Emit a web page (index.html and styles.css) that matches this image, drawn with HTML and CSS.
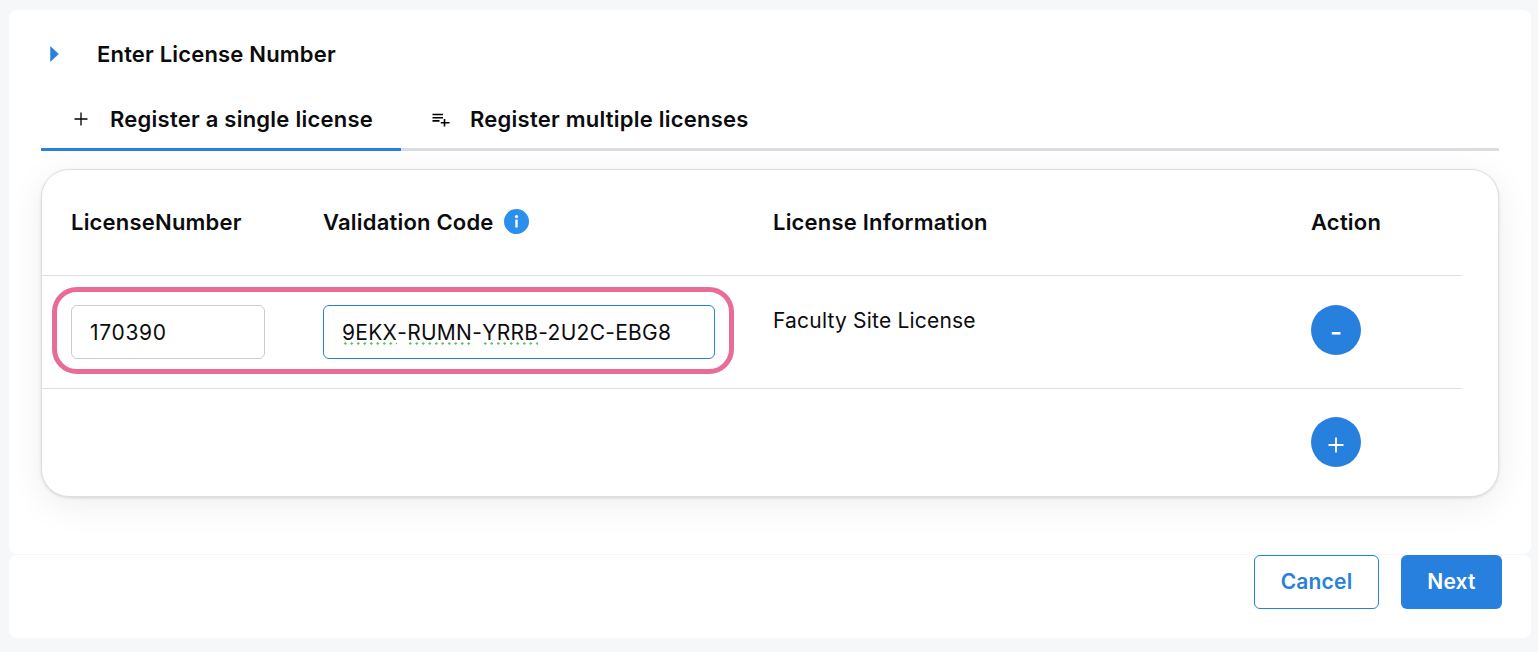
FILE: index.html
```html
<!DOCTYPE html>
<html lang="en">
<head>
<meta charset="utf-8">
<title>Enter License Number</title>
<link rel="stylesheet" href="styles.css">
</head>
<body>
<main class="panel">
  <header class="title-row">
    <svg class="caret" width="9" height="16" viewBox="0 0 9 16"><path d="M0.5 0.5 L8.5 8 L0.5 15.5 Z" fill="#2880de" stroke="#2880de" stroke-width=".5" stroke-linejoin="round"/></svg>
    <h1>Enter License Number</h1>
  </header>
  <nav class="tabs">
    <div class="tab active">
      <svg class="tab-icon" width="16" height="16" viewBox="0 0 16 16"><path d="M8 1.5V14.5M1.5 8H14.5" stroke="#000" stroke-width="1.3" fill="none"/></svg>
      <span>Register a single license</span>
    </div>
    <div class="tab second">
      <svg class="tab-icon-small" width="18" height="14" viewBox="0 0 18 14"><path d="M0.5 1.5H11M0.5 4.7H11M0.5 7.9H7.5M12.5 6V13.5M8.8 9.7H17.5" stroke="#000" stroke-width="1.6" fill="none"/></svg>
      <span>Register multiple licenses</span>
    </div>
  </nav>
  <section class="table-card">
    <div class="row head">
      <div class="col c1">LicenseNumber</div>
      <div class="col c2">Validation Code
        <svg class="info" width="25" height="25" viewBox="0 0 25 25"><circle cx="12.5" cy="12.5" r="12.5" fill="#2b8fee"/><rect x="11.3" y="10.6" width="2.4" height="8" rx=".6" fill="#fff"/><circle cx="12.5" cy="7.6" r="1.6" fill="#fff"/></svg>
      </div>
      <div class="col c3">License Information</div>
      <div class="col c4">Action</div>
    </div>
    <div class="row body">
      <div class="outline"></div>
      <div class="col c1"><div class="field small">170390</div></div>
      <div class="col c2"><div class="field focus"><span class="spell">9EKX</span>-<span class="spell">RUMN</span>-<span class="spell">YRRB</span>-2U2C-EBG8</div></div>
      <div class="col c3 info-text">Faculty Site License</div>
      <div class="col c4"><button class="round minus">-</button></div>
    </div>
    <div class="row foot">
      <div class="col c1"></div>
      <div class="col c2"></div>
      <div class="col c3"></div>
      <div class="col c4"><button class="round plus">
        <svg width="16" height="16" viewBox="0 0 16 16"><path d="M8 .5V15.5M.5 8H15.5" stroke="#fff" stroke-width="1.8" fill="none"/></svg>
      </button></div>
    </div>
  </section>
</main>
<footer class="actions">
  <button class="btn ghost">Cancel</button>
  <button class="btn solid">Next</button>
</footer>
</body>
</html>
```
FILE: styles.css
```css
* { box-sizing: border-box; }
html, body { margin: 0; height: 100%; }
body {
  background: #f6f7f9;
  padding: 10px 7px 0 9px;
  font-family: Inter, "Liberation Sans", sans-serif;
  color: #0c0c0f;
  overflow: hidden;
}
.panel {
  background: #fff;
  border-radius: 8px;
  height: 544px;
  padding: 0 32px;
}
.title-row {
  height: 88px;
  display: flex;
  align-items: center;
}
.caret { margin: 0 0 1px 9px; flex: none; }
h1 {
  margin: 0 0 0 38px;
  font-size: 22px;
  font-weight: 600;
  letter-spacing: 0.18px;
}
.tabs {
  height: 53px;
  display: flex;
  border-bottom: 3px solid #d9dde1;
}
.tab {
  height: 53px;
  display: flex;
  align-items: center;
  font-size: 22px;
  font-weight: 600;
  letter-spacing: 0.24px;
  padding-bottom: 8px;
  border-bottom: 3px solid transparent;
}
.tab.active {
  width: 360px;
  border-bottom-color: #2880de;
  padding-left: 32px;
}
.tab-icon { margin-right: 21px; flex: none; }
.tab.second { padding-left: 31px; }
.tab-icon-small { margin: 2px 20px 0 0; flex: none; }
.table-card {
  margin-top: 18px;
  height: 328px;
  border-radius: 28px;
  border: 1px solid #dedfe1;
  background: #fff;
  box-shadow: 0 8px 36px rgba(0, 0, 0, 0.07), 0 1px 3px rgba(0, 0, 0, 0.12);
  width: 1458px;
}
.row {
  display: flex;
  width: 1420px;
  padding-left: 29px;
  position: relative;
}
.col { flex: none; }
.c1 { width: 252px; }
.c2 { width: 450px; display: flex; align-items: center; }
.c3 { width: 538px; }
.c4 { width: 151px; }
.head {
  height: 106px;
  align-items: center;
  border-bottom: 1px solid #dcdfe3;
  font-size: 22px;
  font-weight: 600;
  letter-spacing: 0.2px;
  padding-bottom: 2px;
}
.info { margin-left: 10px; }
.body {
  height: 113px;
  padding-top: 29px;
  border-bottom: 1px solid #dcdfe3;
  align-items: flex-start;
}
.field {
  height: 54px;
  border: 1px solid #c9ccd4;
  border-radius: 6px;
  padding-left: 18px;
  display: flex;
  align-items: center;
  font-size: 21px;
  letter-spacing: 0.28px;
  width: 392px;
  white-space: pre;
  background: #fff;
}
.field.small { width: 194px; letter-spacing: 0.7px; }
.field.focus { border-color: #2880de; }
.spell {
  background: radial-gradient(circle, #5cbf6a 1px, transparent 1.4px) 0 100% / 6.5px 3px repeat-x;
}
.info-text { font-size: 21px; letter-spacing: 0.2px; padding-top: 3px; }
.outline {
  position: absolute;
  left: 10px;
  top: 11px;
  width: 682px;
  height: 87px;
  border: 5px solid #e96c97;
  border-radius: 25px;
  pointer-events: none;
}
.foot { padding-top: 28px; }
.round {
  width: 50px;
  height: 50px;
  padding: 0;
  border: 0;
  border-radius: 50%;
  background: #2880de;
  color: #fff;
  font: 500 26px Inter, "Liberation Sans", sans-serif;
  display: flex;
  align-items: center;
  justify-content: center;
}
.minus { padding-top: 2px; }
.plus { padding-top: 5px; }
.actions {
  margin-top: 1px;
  height: 83px;
  background: #fff;
  border-radius: 8px;
  display: flex;
  justify-content: flex-end;
  gap: 22px;
  padding-right: 29px;
}
.btn {
  height: 54px;
  border-radius: 6px;
  font: 600 21px Inter, "Liberation Sans", sans-serif;
  letter-spacing: 0.2px;
  padding: 0 0 1px;
}
.ghost { width: 125px; background: #fff; color: #2880de; border: 1px solid #2880de; }
.solid { width: 101px; background: #2880de; color: #fff; border: 0; }
```
